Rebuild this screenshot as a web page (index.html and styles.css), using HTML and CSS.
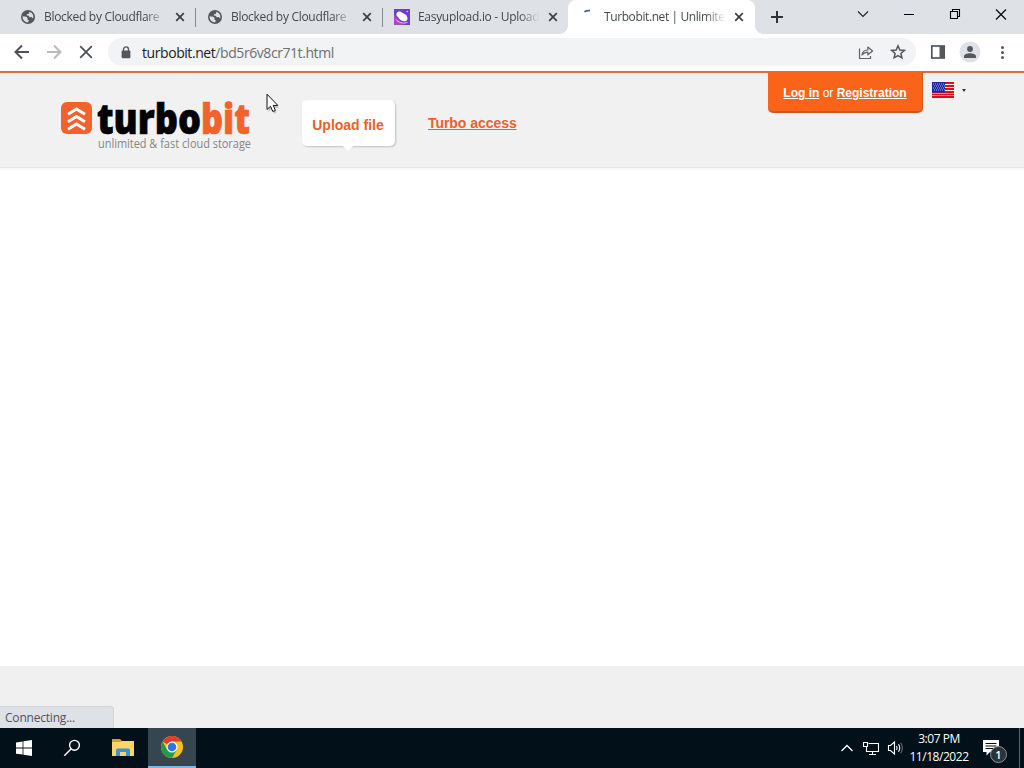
FILE: index.html
```html
<!DOCTYPE html>
<html lang="en">
<head>
    <meta charset="UTF-8">
    <meta name="viewport" content="width=device-width, initial-scale=1.0">
    <title>Turbobit.net | Unlimited</title>
    <link rel="stylesheet" href="styles.css">
</head>
<body>

    <!-- Shared icons -->
    <svg class="sprite" width="0" height="0">
        <symbol id="icon-globe" viewBox="0 0 14 14">
            <circle cx="7" cy="7" r="7" fill="#54585c"/>
            <path d="M1.6 6.2L5.3 6.8 6.8 8.2 6.2 9.6 7.8 10.2 7.2 12.3C4 12.4 1.4 9.8 1.6 6.2zM8.3 1.7C10.6 2.2 12.4 4.3 12.4 7L12 8.5 10.6 7 8.6 7.2 7.8 5.8 5.8 5.6 6 4.2 8 3.8z" fill="#dee1e6"/>
        </symbol>
        <symbol id="icon-close" viewBox="0 0 10 10">
            <path d="M1.2 1.2L8.8 8.8M8.8 1.2L1.2 8.8" fill="none" stroke="#3c4043" stroke-width="1.7"/>
        </symbol>
    </svg>

    <!-- Tab strip -->
    <div class="tab-strip">
        <div class="tab">
            <svg class="favicon" width="14" height="14"><use href="#icon-globe"/></svg>
            <span class="tab-title">Blocked by Cloudflare |</span>
            <svg class="tab-close" width="10" height="10"><use href="#icon-close"/></svg>
        </div>
        <div class="tab">
            <svg class="favicon" width="14" height="14"><use href="#icon-globe"/></svg>
            <span class="tab-title">Blocked by Cloudflare |</span>
            <svg class="tab-close" width="10" height="10"><use href="#icon-close"/></svg>
        </div>
        <div class="tab tab-last">
            <svg class="favicon" width="16" height="16" viewBox="0 0 16 16">
                <rect width="16" height="16" fill="#6a3fd8"/>
                <path d="M0 6L10 16H0z" fill="#a84bb8"/>
                <path d="M3 3.5C4.5 1.8 7 2.4 9 4.2 12 5 14 7.5 13.4 10.5 12.8 12.6 9.5 12.8 7.5 11.5 5.5 10.5 4.8 9 4 8 2 7 2 5 3 3.5z" fill="#fff"/>
                <path d="M2 10.5C4 13.5 9 15 13.5 13.4" fill="none" stroke="#e7c8f3" stroke-width="1"/>
                <circle cx="13.2" cy="2.6" r=".8" fill="#d9c8ff"/>
            </svg>
            <span class="tab-title title-easy">Easyupload.io - Upload</span>
            <svg class="tab-close" width="10" height="10"><use href="#icon-close"/></svg>
        </div>
        <div class="tab tab-active">
            <svg class="favicon" width="16" height="16" viewBox="0 0 16 16">
                <path d="M4.4 2.8Q6.6 1.5 10 1.7" fill="none" stroke="#4a5fb0" stroke-width="1.8"/>
            </svg>
            <span class="tab-title title-turbo">Turbobit.net | Unlimited</span>
            <svg class="tab-close" width="10" height="10"><use href="#icon-close"/></svg>
        </div>
        <svg class="new-tab" width="12" height="12" viewBox="0 0 12 12">
            <path d="M6 0V12M0 6H12" stroke="#303438" stroke-width="2"/>
        </svg>
        <div class="window-buttons">
            <svg width="46" height="28" viewBox="0 0 46 28"><path d="M18 11.5L23 16.5 28 11.5" fill="none" stroke="#222" stroke-width="1.1"/></svg>
            <svg width="46" height="28" viewBox="0 0 46 28"><path d="M18 14.5H28" stroke="#000"/></svg>
            <svg width="46" height="28" viewBox="0 0 46 28"><path d="M18.5 11.5H25.5V18.5H18.5zM20.5 11.5V9.5H27.5V16.5H25.5" fill="none" stroke="#000" stroke-width="1.1"/></svg>
            <svg width="46" height="28" viewBox="0 0 46 28"><path d="M18 9.5L28 19.5M28 9.5L18 19.5" stroke="#000" stroke-width="1.1"/></svg>
        </div>
    </div>

    <!-- Toolbar -->
    <div class="toolbar">
        <div class="nav-buttons">
            <svg width="32" height="32" viewBox="0 0 32 32"><path d="M23 16H10M16 9.5L9.5 16 16 22.5" fill="none" stroke="#4d5156" stroke-width="2"/></svg>
            <svg width="32" height="32" viewBox="0 0 32 32"><path d="M9 16H22M16 9.5L22.5 16 16 22.5" fill="none" stroke="#b9bbbe" stroke-width="2"/></svg>
            <svg width="32" height="32" viewBox="0 0 32 32"><path d="M10.2 10.2L21.8 21.8M21.8 10.2L10.2 21.8" stroke="#4d5156" stroke-width="1.8"/></svg>
        </div>
        <div class="omnibox">
            <svg class="lock" width="10" height="13" viewBox="0 0 10 13">
                <path d="M2.5 5V3.4a2.5 2.5 0 0 1 5 0V5" fill="none" stroke="#54585c" stroke-width="1.4"/>
                <rect x=".6" y="4.6" width="8.8" height="7.6" rx="1" fill="#54585c"/>
            </svg>
            <span class="url"><span class="url-host">turbobit.net</span>/bd5r6v8cr71t.html</span>
            <svg class="share" width="16" height="16" viewBox="0 0 16 16">
                <path d="M1.5 4.5V14.5H12.5V12M4 11C4.4 7.7 6.5 6 9.8 6V3L14.6 7 9.8 10.8V8.2C7.4 8.2 5.6 9 4 11z" fill="none" stroke="#5f6368" stroke-width="1.2" stroke-linejoin="round"/>
            </svg>
            <svg width="16" height="16" viewBox="0 0 16 16">
                <path d="M8 1.8L9.8 6 14.3 6.4 10.9 9.4 11.9 13.8 8 11.5 4.1 13.8 5.1 9.4 1.7 6.4 6.2 6z" fill="none" stroke="#54585c" stroke-width="1.5"/>
            </svg>
        </div>
        <div class="toolbar-buttons">
            <svg width="32" height="32" viewBox="0 0 32 32">
                <rect x="9.8" y="10" width="12.4" height="12" fill="#fff" stroke="#54585c" stroke-width="1.7"/>
                <rect x="17.5" y="10" width="5" height="12" fill="#54585c"/>
            </svg>
            <svg width="32" height="32" viewBox="0 0 32 32">
                <circle cx="16" cy="16" r="10.5" fill="#dee1e6"/>
                <circle cx="16" cy="13" r="2.9" fill="#54585c"/>
                <path d="M10 22V20.2C10 18.3 13.5 17.2 16 17.2S22 18.3 22 20.2V22z" fill="#54585c"/>
            </svg>
            <svg width="32" height="32" viewBox="0 0 32 32">
                <g fill="#54585c"><circle cx="16.5" cy="11.5" r="1.5"/><circle cx="16.5" cy="16.5" r="1.5"/><circle cx="16.5" cy="21.5" r="1.5"/></g>
            </svg>
        </div>
    </div>

    <!-- Page -->
    <div class="page">
        <div class="header">
            <svg class="logo" width="194" height="56" viewBox="0 0 194 56">
                <rect x="1" y="7" width="31" height="32" rx="6" fill="#f1622c"/>
                <path d="M8 19.2L16.5 14 25 19.2M8 26.7L16.5 21.5 25 26.7M8 34.2L16.5 29 25 34.2" fill="none" stroke="#fff" stroke-width="3"/>
                <text class="logo-name" x="37" y="38.5" textLength="104" lengthAdjust="spacingAndGlyphs">turbo</text>
                <text class="logo-name logo-bit" x="141" y="38.5" textLength="49" lengthAdjust="spacingAndGlyphs">bit</text>
                <text class="logo-slogan" x="38" y="53" textLength="153" lengthAdjust="spacingAndGlyphs">unlimited &amp; fast cloud storage</text>
            </svg>
            <a class="nav-upload">Upload file</a>
            <a class="nav-turbo">Turbo access</a>
            <div class="login">
                <a>Log in</a> or <a>Registration</a>
            </div>
            <svg class="flag" width="22" height="16" viewBox="0 0 22 16">
                <rect width="22" height="16" fill="#fff"/>
                <path d="M0 1H22M0 4H22M0 7H22M0 10H22M0 12.5H22M0 15H22" stroke="#d80f20" stroke-width="1.8"/>
                <rect width="13" height="10.5" fill="#2026a0"/>
                <path d="M1 2H13M2 4H13M1 6H13M2 8H13" stroke="#a9aee8" stroke-dasharray="1 1"/>
            </svg>
            <span class="flag-arrow"></span>
        </div>
        <div class="content"></div>
        <div class="footer">
            <div class="status">Connecting...</div>
        </div>
    </div>

    <!-- Taskbar -->
    <div class="taskbar">
        <div class="task">
            <svg width="16" height="16" viewBox="0 0 16 16"><path d="M0 2.4L6.6 1.5V7.6H0zM7.4 1.3L16 0V7.6H7.4zM0 8.4H6.6V14.6L0 13.7zM7.4 8.4H16V16L7.4 14.8z" fill="#fff"/></svg>
        </div>
        <div class="task">
            <svg width="18" height="18" viewBox="0 0 18 18"><circle cx="11.5" cy="6.3" r="4.9" fill="none" stroke="#fff" stroke-width="1.4"/><path d="M8 10L1.3 16.7" stroke="#fff" stroke-width="1.5"/></svg>
        </div>
        <div class="task task-files">
            <svg width="22" height="18" viewBox="0 0 22 18">
                <path d="M0 0H8L10 2H21V7H0z" fill="#d9a020"/>
                <path d="M0 3H8L10 2H22V17H0z" fill="#fbd568"/>
                <path d="M4 17V11Q4 9.5 5.5 9.5H16.5Q18 9.5 18 11V17H14V13H8V17z" fill="#3b93cf"/>
            </svg>
        </div>
        <div class="task task-active">
            <svg width="22" height="22" viewBox="0 0 22 22">
                <circle cx="11" cy="11" r="11" fill="#fbc116"/>
                <path d="M11 11L1.5 5.5A11 11 0 0 1 20.5 5.5H11z" fill="#e33b2e"/>
                <path d="M1.5 5.5A11 11 0 0 0 11 22L15.8 13.7 11 11 6.2 13.7z" fill="#229a4a"/>
                <circle cx="11" cy="11" r="5.5" fill="#fff"/>
                <circle cx="11" cy="11" r="4.3" fill="#3271e6"/>
            </svg>
        </div>
        <div class="tray">
            <svg width="14" height="16" viewBox="0 0 14 16"><path d="M1.5 11L7 5.5 12.5 11" fill="none" stroke="#fff" stroke-width="1.3"/></svg>
            <svg class="network" width="17" height="15" viewBox="0 0 17 15">
                <path d="M5.5 2.5H15.5V10.5H3.5V6M.5 1.5H4.5V5.5H.5zM9.5 10.5V13.5M6 13.5H13" fill="none" stroke="#fff" stroke-width="1.1"/>
            </svg>
            <svg width="17" height="16" viewBox="0 0 17 16">
                <path d="M1.5 5.5H3.5L7.5 2V14L3.5 10.5H1.5z" fill="none" stroke="#fff" stroke-width="1.1"/>
                <path d="M9.5 6Q10.8 8 9.5 10M11.5 4.3Q14 8 11.5 11.7" fill="none" stroke="#fff" stroke-width="1.1"/>
                <path d="M13.7 2.7Q17 8 13.7 13.3" fill="none" stroke="#687077" stroke-width="1.1"/>
            </svg>
            <div class="clock">
                <div class="time">3:07 PM</div>
                <div class="date">11/18/2022</div>
            </div>
            <div class="notifications">
                <svg width="17" height="17" viewBox="0 0 17 17">
                    <path d="M0 0H16V12H7L3.5 15.5V12H0z" fill="#fff"/>
                    <path d="M2.5 3.5H13.5M2.5 6H13.5M2.5 8.5H10" stroke="#020c18"/>
                </svg>
                <span class="badge">1</span>
            </div>
            <div class="show-desktop"></div>
        </div>
    </div>

    <!-- Mouse pointer -->
    <svg class="pointer" width="14" height="22" viewBox="0 0 14 22">
        <path d="M2.5 3V19L5.8 15.8 8 20.5 10.4 19.5 8.4 15H13z" fill="#000" opacity=".2"/>
        <path d="M1 1.2V16.5L4.5 13.3 6.8 18.5 9.4 17.4 7.2 12.4H11.8z" fill="#fff" stroke="#111" stroke-width="1"/>
    </svg>

</body>
</html>
```

FILE: styles.css
```css
:root {
    --chrome-bg: #dee1e6;
    --chrome-text: #45494d;
    --icon: #54585c;
    --orange: #e8622a;
    --page-gray: #f1f1f1;
    --taskbar-bg: #021019;
    --ui-font: 'Open Sans', 'Noto Sans', sans-serif;
    --page-font: 'Liberation Sans', Arial, sans-serif;
}

* {
    margin: 0;
    padding: 0;
    box-sizing: border-box;
}

body {
    width: 1024px;
    height: 768px;
    overflow: hidden;
    display: flex;
    flex-direction: column;
    font-family: var(--ui-font);
    font-size: 12px;
    background: #fff;
}

svg {
    display: block;
    flex: none;
}

.sprite {
    position: absolute;
}

/* Tab strip */
.tab-strip {
    height: 34px;
    flex: none;
    display: flex;
    padding-left: 9px;
    background: var(--chrome-bg);
    color: var(--chrome-text);
}

.tab {
    width: 187px;
    height: 34px;
    display: flex;
    align-items: center;
    padding: 0 11px 0 12px;
    position: relative;
}

/* Separator between inactive tabs */
.tab::after {
    content: '';
    position: absolute;
    right: 0;
    top: 8px;
    width: 1px;
    height: 19px;
    background: #85898d;
}

.tab-last::after {
    display: none;
}

.tab-last {
    padding-left: 11px;
    padding-right: 12px;
}

.tab-active {
    margin-left: -2px;
    padding-left: 12px;
    background: #fff;
    border-radius: 8px 8px 0 0;
}

/* Curved feet of the active tab */
.tab-active::before,
.tab-active::after {
    content: '';
    display: block;
    position: absolute;
    top: auto;
    bottom: 0;
    width: 8px;
    height: 8px;
    background: radial-gradient(circle at 0 0, transparent 7.5px, #fff 8px);
}

.tab-active::before {
    left: -8px;
}

.tab-active::after {
    right: -8px;
    background: radial-gradient(circle at 100% 0, transparent 7.5px, #fff 8px);
}

.tab-title {
    width: 124px;
    margin-left: 9px;
    padding-bottom: 1px;
    overflow: hidden;
    white-space: nowrap;
    letter-spacing: -0.3px;
    -webkit-mask-image: linear-gradient(to right, #000 82%, transparent 98%);
    mask-image: linear-gradient(to right, #000 82%, transparent 98%);
}

.title-easy,
.title-turbo {
    margin-left: 8px;
}

.title-turbo {
    letter-spacing: -0.4px;
}

.tab-close {
    margin-left: auto;
}

.new-tab {
    margin: 11px 0 0 16px;
}

.window-buttons {
    display: flex;
    margin-left: auto;
}

/* Toolbar */
.toolbar {
    height: 37px;
    flex: none;
    display: flex;
    align-items: center;
    padding: 0 5px 1px 6px;
    background: #fff;
}

.nav-buttons,
.toolbar-buttons {
    display: flex;
}

.omnibox {
    width: 808px;
    height: 28px;
    margin: 0 6px 0 6px;
    padding: 0 10px 0 13px;
    display: flex;
    align-items: center;
    border-radius: 14px;
    background: #f1f3f4;
}

.url {
    margin-left: 11px;
    font-size: 14px;
    letter-spacing: -0.43px;
    color: #6b6f74;
}

.url-host {
    color: #202124;
}

.share {
    margin: 0 16px 0 auto;
}

/* Page */
.page {
    flex: 1;
    display: flex;
    flex-direction: column;
    border-top: 2px solid #de6b42;
    font-family: var(--page-font);
}

.header {
    height: 95px;
    flex: none;
    display: flex;
    align-items: flex-start;
    padding-left: 60px;
    background: var(--page-gray);
    border-bottom: 1px solid #e6e6e6;
}

.logo {
    margin-top: 22px;
}

.logo-name {
    font-family: 'Open Sans', sans-serif;
    font-size: 42px;
    font-weight: 800;
    fill: #000;
    stroke: #000;
    stroke-width: 0.7px;
}

.logo-bit {
    fill: #f1622c;
    stroke: #f1622c;
}

.logo-slogan {
    font-family: 'Open Sans', sans-serif;
    font-size: 12px;
    fill: #858585;
}

.nav-upload {
    width: 93px;
    height: 46px;
    margin: 27px 0 0 48px;
    padding-right: 1px;
    border-radius: 5px;
    position: relative;
    background: #fff;
    box-shadow: 1px 1px 2px rgba(0, 0, 0, 0.2);
    color: var(--orange);
    font-size: 14px;
    font-weight: bold;
    line-height: 50px;
    text-align: center;
}

/* Pointer under the bubble */
.nav-upload::after {
    content: '';
    position: absolute;
    left: 41px;
    top: 46px;
    border: 5px solid transparent;
    border-top-color: #fff;
    border-bottom: 0;
}

.nav-turbo {
    margin: 42px 0 0 33px;
    color: var(--orange);
    font-size: 14px;
    font-weight: bold;
    line-height: 16px;
    letter-spacing: -0.05px;
    text-decoration: underline;
}

.login {
    width: 155px;
    height: 41px;
    margin: -1px 9px 0 auto;
    border: solid #d4551a;
    border-width: 0 1px 2px 0;
    border-radius: 0 0 5px 5px;
    background: #f9641a;
    color: #fff;
    font-size: 12px;
    line-height: 42px;
    text-align: center;
}

.login a {
    font-weight: bold;
    text-decoration: underline;
}

.flag {
    margin-top: 9px;
}

.flag-arrow {
    margin: 16px 58px 0 8px;
    border: 2.5px solid transparent;
    border-top: 3px solid #333;
    border-bottom: 0;
}

.content {
    flex: 1;
    border-top: 2px solid #f9f9f9;
}

.footer {
    height: 62px;
    flex: none;
    display: flex;
    align-items: flex-end;
    background: #f0f0f0;
}

/* Status bubble */
.status {
    width: 114px;
    height: 22px;
    padding-left: 5px;
    border-top: 1px solid #d2d4d8;
    border-right: 1px solid #d2d4d8;
    border-radius: 0 4px 0 0;
    background: var(--chrome-bg);
    color: #50545a;
    font-family: var(--ui-font);
    font-size: 12px;
    line-height: 22px;
    letter-spacing: -0.2px;
}

/* Taskbar */
.taskbar {
    height: 40px;
    flex: none;
    display: flex;
    background: var(--taskbar-bg);
    color: #fff;
}

.task {
    width: 48px;
    height: 40px;
    display: flex;
    align-items: center;
    justify-content: center;
}

.task-files {
    width: 52px;
    padding-left: 2px;
}

.task-active {
    background: #364650;
    border-bottom: 2px solid #76b9ed;
}

.tray {
    margin-left: auto;
    display: flex;
    align-items: center;
}

.network {
    margin: 0 7px 0 9px;
}

.clock {
    width: 74px;
    text-align: center;
    line-height: 18px;
    letter-spacing: -0.45px;
}

.notifications {
    margin-left: 7px;
    width: 36px;
    position: relative;
}

.tray > svg {
    position: relative;
    left: 2px;
}

.badge {
    position: absolute;
    left: 7px;
    top: 6px;
    width: 17px;
    height: 17px;
    border: 1px solid #8c9296;
    border-radius: 50%;
    background: #2b343b;
    font-size: 11px;
    font-weight: 600;
    line-height: 15px;
    text-align: center;
}

.show-desktop {
    width: 5px;
    height: 40px;
    border-left: 1px solid #5b646b;
}

.pointer {
    position: absolute;
    left: 266px;
    top: 93px;
}
```
